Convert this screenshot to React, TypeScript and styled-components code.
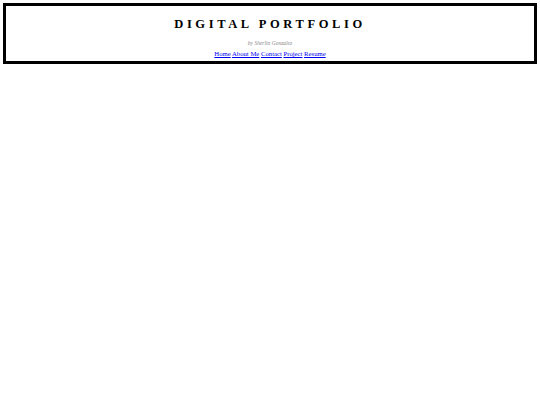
import React from "react";
import styled, { createGlobalStyle } from "styled-components";

const GlobalStyle = createGlobalStyle`
  body {
    margin: 3px;
    background: #ffffff;
    font-family: "Liberation Serif", "Times New Roman", serif;
  }
`;

const Header = styled.header`
  border: 3px solid #000;
  padding: 10px 0 3px;
  text-align: center;
`;

const Title = styled.h1`
  margin: 0;
  font-size: 12.5px;
  font-weight: bold;
  letter-spacing: 3.6px;
  line-height: 16px;
`;

const Byline = styled.p`
  margin: 7px 0 0;
  font-size: 5.5px;
  font-style: italic;
  color: #888;
  line-height: 8px;
`;

const Nav = styled.nav`
  margin-top: 2px;
  font-size: 6.7px;
  line-height: 9px;
`;

const NavLink = styled.a`
  color: #0000ee;
  text-decoration: underline;
`;

const links = ["Home", "About Me", "Contact", "Project", "Resume"];

const App: React.FC = () => {
  return (
    <>
      <GlobalStyle />
      <Header>
        <Title>DIGITAL PORTFOLIO</Title>
        <Byline>by Sherlin Gonzalez</Byline>
        <Nav>
          {links.map((l, i) => (
            <React.Fragment key={l}>
              <NavLink href="#">{l}</NavLink>
              {i < links.length - 1 ? " " : ""}
            </React.Fragment>
          ))}
        </Nav>
      </Header>
    </>
  );
};

export default App;
